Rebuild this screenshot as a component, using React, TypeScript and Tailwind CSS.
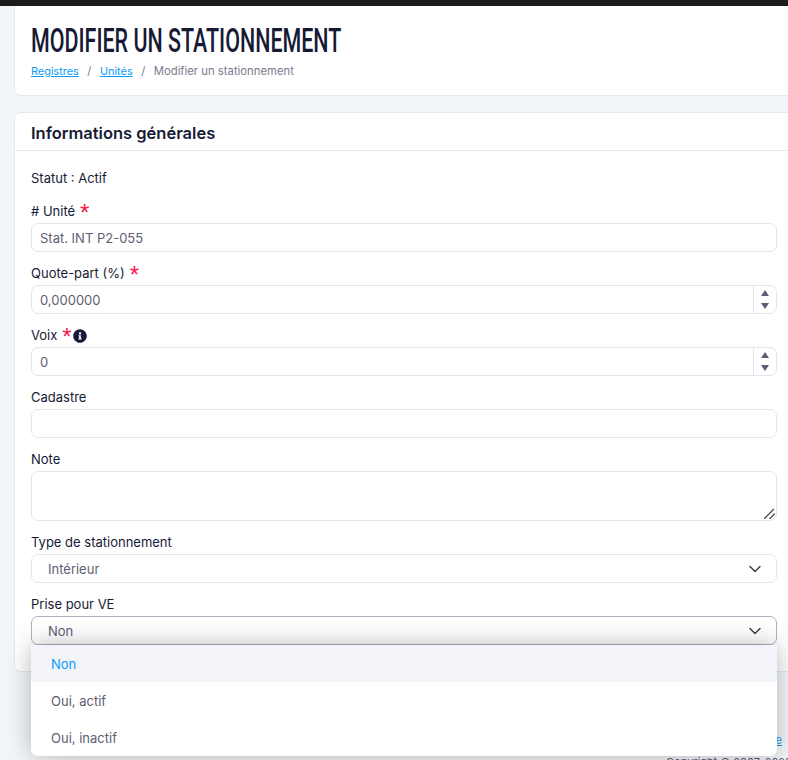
import React from 'react'
import { ChevronDown } from 'lucide-react'
import { FaInfoCircle } from 'react-icons/fa'

const inputCls = 'w-full h-[29px] border border-[#e4e4ee] rounded-[7px] bg-white px-2 flex items-center text-[13px] text-[#5e5e72]'

function Label({ text, required, info }: { text: string; required?: boolean; info?: boolean }) {
  return (
    <div className="h-[20px] mb-[1px] flex items-center text-[13px] text-[#161a35]">
      <span>{text}</span>
      {required && <span className="ml-[5px] h-[14px] text-[#f5174f] text-[24px] leading-[15px] font-['Liberation_Sans',sans-serif]">*</span>}
      {info && <FaInfoCircle className="ml-[1px] w-[14px] h-[14px] text-[#161a35]" />}
    </div>
  )
}

function NumberField({ value }: { value: string }) {
  return (
    <div className={inputCls + ' justify-between !pr-0'}>
      <span className="pt-[2px]">{value}</span>
      <div className="h-full w-[23px] border-l border-[#e4e4ee] flex flex-col items-center justify-center gap-[7px]">
        <span className="w-0 h-0 border-x-[4px] border-x-transparent border-b-[6px] border-b-[#5e5e72]" />
        <span className="w-0 h-0 border-x-[4px] border-x-transparent border-t-[6px] border-t-[#5e5e72]" />
      </div>
    </div>
  )
}

export default function App() {
  return (
    <div className="w-[788px] h-[760px] overflow-hidden bg-[#f3f6f9] font-['Inter','Liberation_Sans',sans-serif] relative">
      <div className="h-[6px] bg-[#1c1c1c]" />
      <div className="pl-[14px]">
        {/* Page header */}
        <section className="h-[90px] bg-white border border-r-0 border-t-0 border-[#e6e8ef] rounded-bl-[6px] pl-[16px] pt-[16px]">
          <h1 className="text-[33px] leading-[38px] font-medium text-[#161a35] font-['Roboto',sans-serif] uppercase origin-left scale-x-[0.65] whitespace-nowrap">
            Modifier un stationnement
          </h1>
          <div className="mt-[3px] text-[11.3px] leading-[16px] flex gap-[8.5px] text-[#7a7a8c]">
            <span className="text-[#0c9cf5] underline text-[10.9px]">Registres</span>
            <span>/</span>
            <span className="text-[#0c9cf5] underline text-[10.9px]">Unités</span>
            <span>/</span>
            <span>Modifier un stationnement</span>
          </div>
        </section>

        {/* Form */}
        <section className="mt-[16px] h-[560px] bg-white border border-r-0 border-[#e6e8ef] rounded-l-[6px]">
          <div className="h-[38px] border-b border-[#e6e8ef] pl-[16px] pt-[4px] flex items-center text-[16.5px] font-semibold text-[#161a35]">
            Informations générales
          </div>
          <div className="pl-[16px] pr-[11px]">
            <div className="h-[20px] mt-[18px] mb-[13px] flex items-center text-[13px] text-[#161a35]">Statut : Actif</div>
            <Label text="# Unité" required />
            <div className={inputCls}><span className="pt-[2px]">Stat. INT P2-055</span></div>
            <div className="mt-[12px]"><Label text="Quote-part (%)" required /></div>
            <NumberField value="0,000000" />
            <div className="mt-[12px]"><Label text="Voix" required info /></div>
            <NumberField value="0" />
            <div className="mt-[12px]"><Label text="Cadastre" /></div>
            <div className={inputCls} />
            <div className="mt-[12px]"><Label text="Note" /></div>
            <div className={inputCls + ' !h-[50px] relative'}>
              <svg className="absolute right-[1px] bottom-[1px]" width="11" height="11" viewBox="0 0 10 10">
                <path d="M0 10 L9 1 M5 10 L10 5" stroke="#555560" strokeWidth="1.3" fill="none" />
              </svg>
            </div>
            <div className="mt-[12px]"><Label text="Type de stationnement" /></div>
            <div className={inputCls + ' justify-between !pl-[16px] !pr-[11px]'}>
              <span className="pt-[2px]">Intérieur</span>
              <ChevronDown className="w-[20px] h-[20px] text-[#3f3f50]" strokeWidth={1.8} />
            </div>
            <div className="mt-[12px]"><Label text="Prise pour VE" /></div>
            <div className="relative">
              <div className="w-full h-[29px] border border-[#aeaebf] rounded-[7px] bg-white pl-[16px] pr-[11px] flex items-center justify-between text-[13px] text-[#5e5e72]">
                <span className="pt-[2px]">Non</span>
                <ChevronDown className="w-[20px] h-[20px] text-[#3f3f50]" strokeWidth={1.8} />
              </div>
              {/* Open select menu */}
              <div className="absolute left-0 right-0 top-[29px] z-10 bg-white rounded-b-[7px] shadow-[0_0_24px_rgba(0,0,0,0.28)] text-[13px]">
                <div className="h-[37px] pl-[20px] pt-[2px] flex items-center bg-[#f3f4f9] text-[#0c9cf5]">Non</div>
                <div className="h-[37px] pl-[20px] pt-[2px] flex items-center text-[#5e5e72]">Oui, actif</div>
                <div className="h-[37px] pl-[20px] pt-[2px] flex items-center text-[#5e5e72]">Oui, inactif</div>
              </div>
            </div>
          </div>
        </section>

        <footer className="mt-[60px] text-[11px] leading-[16px] whitespace-nowrap">
          <div className="flex justify-end pr-[6px]">
            <span className="text-[#0c9cf5] underline">Conditions d'utilisation et politique de vie privée</span>
          </div>
          <div className="pl-[652px] mt-[6px] text-[#5e5e72]">Copyright © 2007-2025 Unités</div>
        </footer>
      </div>
    </div>
  )
}
